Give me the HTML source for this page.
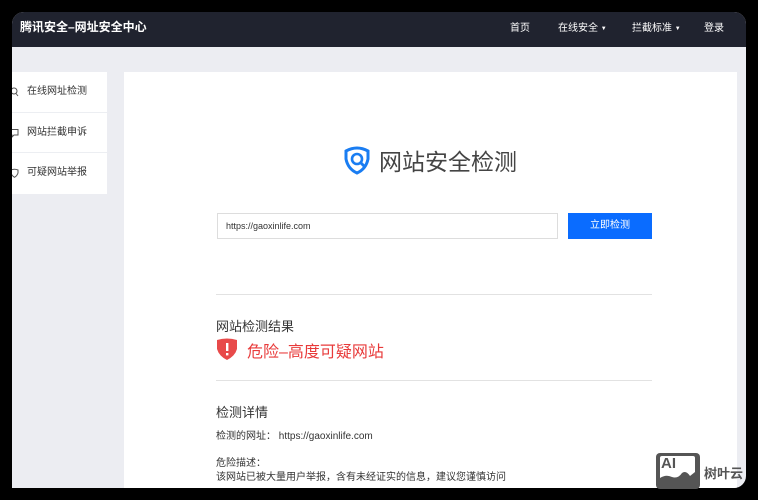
<!DOCTYPE html>
<html><head><meta charset="utf-8"><style>
*{margin:0;padding:0;box-sizing:border-box}
body{width:758px;height:500px;background:#000;position:relative;overflow:hidden;font-family:"Liberation Sans","Noto Sans CJK SC",sans-serif;color:#333}
.win{position:absolute;left:12px;top:12px;width:734px;height:476px;background:#ecedf2;border-radius:12px 12px 12px 0;overflow:hidden}
.hd{position:absolute;left:0;top:0;width:100%;height:35px;background:#20232f;color:#fff}
.hd .t{position:absolute;left:8px;top:6px;font-size:12px;font-weight:bold}
.hd .n{position:absolute;top:7px;font-size:10px}
.hd .n i{font-style:normal;font-size:6px;vertical-align:1px}
.side{position:absolute;left:0;top:60px;width:95px;height:122px;background:#fff}
.side div{height:40.5px;border-bottom:1px solid #eceef2;font-size:10px;line-height:40px;padding-left:15px;position:relative;color:#333}
.side div svg{position:absolute;left:-2px;top:15px}
.main{position:absolute;left:112px;top:60px;width:613px;height:420px;background:#fff}
.abs{position:absolute}
</style></head><body>
<div class="win">
 <div class="hd">
  <div class="t">腾讯安全–网址安全中心</div>
  <div class="n" style="left:498px">首页</div>
  <div class="n" style="left:546px">在线安全 <i>▼</i></div>
  <div class="n" style="left:620px">拦截标准 <i>▼</i></div>
  <div class="n" style="left:692px">登录</div>
 </div>
 <div class="side">
  <div><svg width="9" height="10" viewBox="0 0 9 10"><circle cx="4" cy="4" r="3" fill="none" stroke="#555" stroke-width="1"/><path d="M6 6.5 L8 9" stroke="#555"/></svg>在线网址检测</div>
  <div><svg width="9" height="10" viewBox="0 0 9 10"><path d="M1 1.5 H8 V7 H4 L2 9 V7 H1 Z" fill="none" stroke="#555"/></svg>网站拦截申诉</div>
  <div style="border:none"><svg width="9" height="10" viewBox="0 0 9 10"><path d="M1 2 Q4.5 0.5 8 2 V5 Q7 8 4.5 9.3 Q2 8 1 5 Z" fill="none" stroke="#555"/></svg>可疑网站举报</div>
 </div>
 <div class="main">
  <svg class="abs" style="left:218px;top:73px" width="30" height="30" viewBox="0 0 30 30"><path d="M4 6 Q15 0 26 6 L26 14 Q24 24 15 28 Q6 24 4 14 Z" fill="none" stroke="#1a7df2" stroke-width="3"/><circle cx="15" cy="14" r="5" fill="none" stroke="#1a7df2" stroke-width="2.6"/><path d="M18 17 L22 21" stroke="#1a7df2" stroke-width="3"/></svg>
  <div class="abs" style="left:255px;top:71px;font-size:23px;color:#444">网站安全检测</div>
  <div class="abs" style="left:93px;top:141px;width:341px;height:26px;border:1px solid #ddd;font-size:9px;line-height:24px;padding-left:8px">https://gaoxinlife.com</div>
  <div class="abs" style="left:444px;top:141px;width:84px;height:26px;background:#0a6cff;color:#fff;font-size:10px;line-height:26px;text-align:center">立即检测</div>
  <div class="abs" style="left:92px;top:222px;width:436px;height:1px;background:#e2e2e2"></div>
  <div class="abs" style="left:92px;top:244px;font-size:13px;color:#333">网站检测结果</div>
  <svg class="abs" style="left:92px;top:265px" width="22" height="24" viewBox="0 0 22 24"><path d="M1 3 Q11 0 21 3 L21 12 Q19 19 11 23 Q3 19 1 12 Z" fill="#e84a4a"/><rect x="10" y="6" width="2.4" height="8" fill="#fff"/><rect x="10" y="16" width="2.4" height="2.4" fill="#fff"/></svg>
  <div class="abs" style="left:123px;top:266px;font-size:16px;color:#e83a3a">危险–高度可疑网站</div>
  <div class="abs" style="left:92px;top:308px;width:436px;height:1px;background:#e2e2e2"></div>
  <div class="abs" style="left:92px;top:330px;font-size:13px;color:#333">检测详情</div>
  <div class="abs" style="left:92px;top:355px;font-size:10px;color:#333">检测的网址：&nbsp;https://gaoxinlife.com</div>
  <div class="abs" style="left:92px;top:382px;font-size:10px;color:#333">危险描述：</div>
  <div class="abs" style="left:92px;top:396px;font-size:10px;color:#333">该网站已被大量用户举报，含有未经证实的信息，建议您谨慎访问</div>
 </div>
</div>
<div class="abs" style="left:656px;top:453px;width:44px;height:36px;background:#555;border-radius:4px"></div>
<div class="abs" style="left:660px;top:456px;width:35px;height:27px;background:#fff;border-radius:2px"></div>
<div class="abs" style="left:661px;top:455px;font-size:15px;font-weight:bold;color:#555">AI</div>
<svg class="abs" style="left:660px;top:470px" width="35" height="13" viewBox="0 0 35 13"><path d="M0 13 V8 Q6 4 12 7 Q18 9 22 3 Q26 0 30 6 L35 2 V13 Z" fill="#555"/></svg>
<div class="abs" style="left:704px;top:463px;font-size:13px;font-weight:bold;color:#555">树叶云</div>
</body></html>
